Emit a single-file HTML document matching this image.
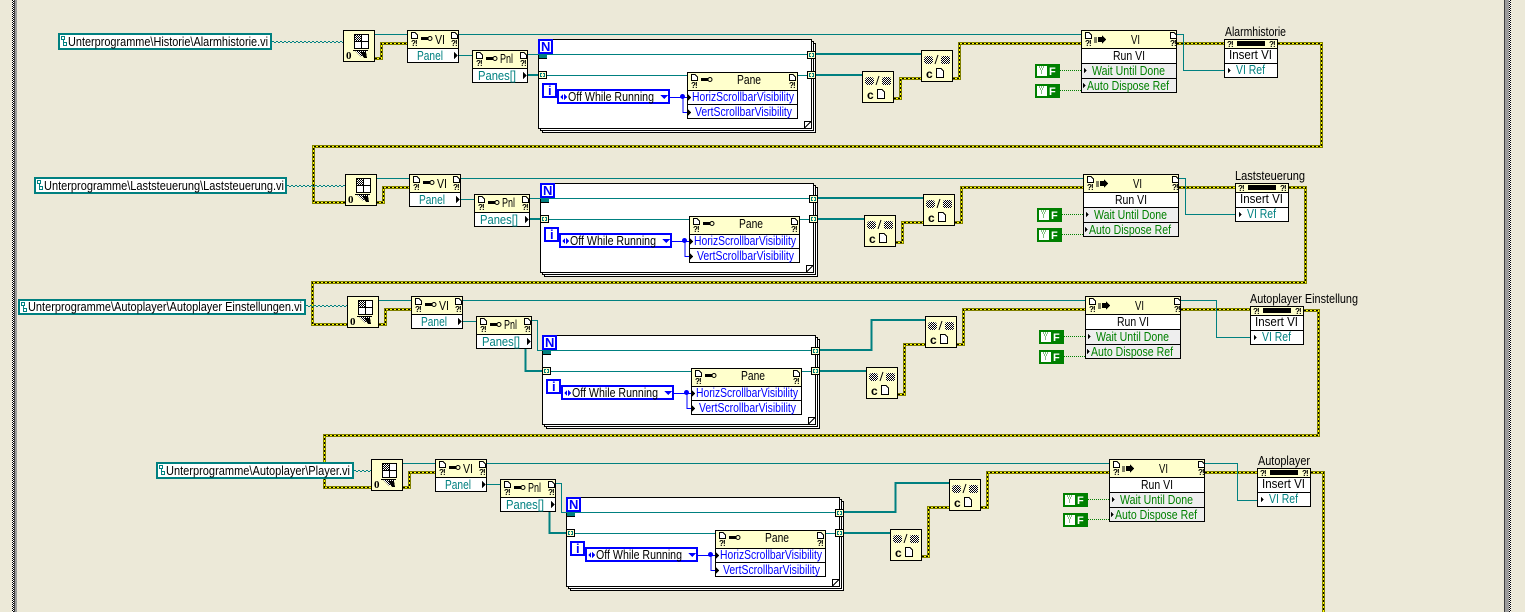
<!DOCTYPE html>
<html>
<head>
<meta charset="utf-8">
<style>
html,body{margin:0;padding:0;background:#ece9d8;overflow:hidden}
svg{display:block}
text{font-family:"Liberation Sans",sans-serif;font-size:13px;fill:#000}
.te text,text.te{fill:#008080}
text.bl{fill:#0000ff}
text.gr{fill:#008000}
text.q{font-size:8px;font-weight:bold}
</style>
</head>
<body>
<svg width="1525" height="612" viewBox="0 0 1525 612" shape-rendering="crispEdges">
<defs>
<pattern id="ck" width="2" height="2" patternUnits="userSpaceOnUse"><rect width="2" height="2" fill="#fff"/><rect width="1" height="1"/><rect x="1" y="1" width="1" height="1"/></pattern>
<path id="d" d="M.5 .5H4L6.5 3V6.5H.5Z" fill="#fff" stroke="#000"/>
<g id="k"><rect x="0" y="1" width="7" height="3"/><circle cx="9" cy="2.5" r="2" fill="#ffc" stroke="#000" shape-rendering="auto"/></g>
<path id="yw" fill="none" d="M375 58.5H381.5V43.5H407M894 98.5H900.5V78.5H921M953 78.5H959.5V43.5H1081M1177 43.5H1224M1278 43.5H1321.5V146.5H313.5V202.5H345
M377 202.5H383.5V187.5H409M896 242.5H902.5V222.5H923M955 222.5H961.5V187.5H1083M1179 187.5H1235M1289 187.5H1305.5V282.5H312.5V324.5H347
M379 324.5H385.5V309.5H411M898 394.5H904.5V344.5H925M957 344.5H963.5V309.5H1085M1181 309.5H1250M1304 310.5H1318.5V435.5H324.5V487.5H371
M403 487.5H409.5V472.5H435M922 556.5H928.5V507.5H949M981 507.5H987.5V472.5H1109M1205 472.5H1257M1311 472.5H1323.5V612"/>

<g id="loop">
<rect x="542.5" y="43.5" width="273" height="89" fill="#fff" stroke="#000"/>
<rect x="540.5" y="41.5" width="273" height="89" fill="#fff" stroke="#000"/>
<rect x="538.5" y="39.5" width="273" height="89" fill="#fff" stroke="#000"/>
<path d="M804.5 128V121.5H811M804.5 128L811.5 121" fill="none" stroke="#000"/>
</g>

<g id="loopTop">
<rect x="539" y="54" width="8" height="4" fill="#008080"/><path d="M538 58.5H547" stroke="#000"/>
<rect x="539" y="40" width="13" height="13" fill="#fff" stroke="#00f" stroke-width="2"/>
<rect x="538.5" y="71.5" width="8" height="7" fill="#ffc" stroke="#000"/>
<path d="M542 73.5H540.5V76.5H542M543 73.5H544.5V76.5H543" fill="none" stroke="#008080"/>
<rect x="807.5" y="51.5" width="8" height="7" fill="#ffc" stroke="#000"/>
<path d="M811 53.5H809.5V56.5H811M812 53.5H813.5V56.5H812" fill="none" stroke="#008080"/>
<rect x="807.5" y="71.5" width="8" height="7" fill="#ffc" stroke="#000"/>
<path d="M811 73.5H809.5V76.5H811M812 73.5H813.5V76.5H812" fill="none" stroke="#008080"/>
<path d="M670 97.5H687M683 97V112.5H687" fill="none" stroke="#00f"/>
<circle cx="682.5" cy="96.5" r="2.5" fill="#00f" shape-rendering="auto"/>
<rect x="543" y="84" width="13" height="13" fill="#fff" stroke="#00f" stroke-width="2"/>
<rect x="558" y="90" width="111" height="13" fill="#fff" stroke="#00f" stroke-width="2"/>
<path d="M563 94V100L560 97ZM564 94V100L567 97ZM660 95H668L664 99Z" fill="#00f"/>
<rect x="687.5" y="72.5" width="110" height="46" fill="#fff" stroke="#000"/>
<rect x="688" y="73" width="109" height="17" fill="#ffc"/>
<path d="M687 90.5H798M687 104.5H798" stroke="#000"/>
<path d="M688 94L691 97.5L688 101ZM688 109L691 112.5L688 116Z"/>
<use href="#d" x="691" y="74"/><use href="#d" x="789" y="74"/>
<use href="#k" x="701" y="77"/>
</g>

<g id="cn">
<rect x=".5" y=".5" width="31" height="31" fill="#ffc" stroke="#000"/>
<rect x="3" y="6" width="9" height="8" rx="3" fill="url(#ck)" shape-rendering="auto"/>
<path d="M14 14L17 5" stroke="#000" fill="none" shape-rendering="auto"/>
<rect x="20" y="6" width="9" height="8" rx="2" fill="url(#ck)" shape-rendering="auto"/>
<path d="M15.5 18.5H20L22.5 21V27.5H15.5Z" fill="#fff" stroke="#000"/>
</g>

<g id="fc">
<rect x="1036" y="65" width="23" height="12" fill="#fff" stroke="#008000" stroke-width="2"/>
<rect x="1047" y="65" width="12" height="12" fill="#008000"/>
<path d="M1039 67H1044M1040 69H1043M1041 71H1043M1041 73H1043" stroke="#008000" stroke-dasharray="1 1"/>
</g>

<g id="A">
<rect x="343.5" y="30.5" width="31" height="31" fill="#ffc" stroke="#000"/>
<rect x="354.5" y="34.5" width="14" height="14" fill="#fff" stroke="#000"/>
<rect x="355" y="35" width="6" height="6" fill="url(#ck)"/>
<path d="M361.5 34V48M354 41.5H368M353 50.5H368" stroke="#000"/>
<path d="M355 51H367L361 57Z" fill="url(#ck)"/>
<path d="M360 52H366L367 58H364Z"/>

<rect x="407.5" y="30.5" width="51" height="32" fill="#fff" stroke="#000"/>
<rect x="408" y="31" width="50" height="17" fill="#ffc"/>
<path d="M407 48.5H459" stroke="#000"/>
<use href="#d" x="411" y="32"/><use href="#d" x="451" y="32"/>
<use href="#k" x="421" y="36"/>
<path d="M454 52L458 55.5L454 59Z"/>

<rect x="472.5" y="50.5" width="55" height="32" fill="#fff" stroke="#000"/>
<rect x="473" y="51" width="54" height="17" fill="#ffc"/>
<path d="M472 68.5H528" stroke="#000"/>
<use href="#d" x="476" y="52"/><use href="#d" x="520" y="52"/>
<use href="#k" x="486" y="56"/>
<path d="M523 72L527 75.5L523 79Z"/>

<use href="#cn" x="921" y="50"/>

<rect x="1081.5" y="30.5" width="95" height="62" fill="#fff" stroke="#000"/>
<rect x="1082" y="31" width="94" height="17" fill="#ffc"/>
<rect x="1082" y="64" width="94" height="28" fill="#eee"/>
<path d="M1081 48.5H1177M1081 63.5H1177M1081 78.5H1177" stroke="#000"/>
<use href="#d" x="1085" y="32"/><use href="#d" x="1170" y="32"/>
<path d="M1094 38H1097M1094 40H1097M1094 42H1097" stroke="#000"/>
<path d="M1098 37H1102V35L1106 39.5L1102 44V42H1098Z"/>
<path d="M1084 68L1087 70.5L1084 73ZM1083 83L1086 85.5L1083 88Z"/>

<use href="#fc"/>
<use href="#fc" y="20"/>
<path d="M1060 70.5H1081M1060 90.5H1081" stroke="#008000" stroke-dasharray="1 1"/>
</g>

<g id="I">
<rect x=".5" y=".5" width="53" height="38" fill="#fff" stroke="#000"/>
<rect x="1" y="1" width="52" height="8" fill="#ffc"/>
<rect x="13" y="2" width="28" height="5"/>
<path d="M0 9.5H54M0 24.5H54" stroke="#000"/>
<path d="M4 29L7 31.5L4 34Z"/>
</g>
</defs>

<rect width="1525" height="612" fill="#ece9d8"/>
<!-- diagram frame borders -->
<rect x="12" y="0" width="2" height="612" fill="url(#ck)"/>
<rect x="14" y="0" width="3" height="612" fill="#9c9c9c"/>
<rect x="14" y="0" width="1" height="612" fill="#404040"/>
<rect x="1504" y="0" width="1" height="612" fill="#404040"/>
<rect x="1505" y="0" width="4" height="612" fill="#9c9c9c"/>
<rect x="1509" y="0" width="2" height="612" fill="url(#ck)"/>

<!-- loop frames -->
<use href="#loop"/>
<use href="#loop" x="2" y="144"/>
<use href="#loop" x="4" y="296"/>
<use href="#loop" x="28" y="458"/>

<!-- yellow refnum wires -->
<use href="#yw" stroke="#808000" stroke-width="3"/>
<use href="#yw" stroke="#ffff00" stroke-width="1"/>
<use href="#yw" stroke="#000" stroke-width="1" stroke-dasharray="2 2"/>

<!-- thin teal wires -->
<path fill="none" stroke="#008080" d="M375 34.5H407M459 34.5H1081M459 55.5H472M528 54.5H807M547 75.5H687M797 75.5H807M1177 34.5H1183.5V70.5H1224
M377 178.5H409M461 178.5H1083M461 199.5H474M530 198.5H809M549 219.5H689M799 219.5H809M1179 178.5H1185.5V214.5H1235
M379 300.5H411M463 300.5H1085M463 321.5H476M532 320.5H537.5V350.5H811M551 371.5H691M801 371.5H811M1181 300.5H1216.5V337.5H1250
M403 463.5H435M487 463.5H1109M487 484.5H500M556 483.5H561.5V512.5H835M575 533.5H715M825 533.5H835M1205 463.5H1237.5V500.5H1257"/>
<!-- thick teal wires -->
<path fill="none" stroke="#008080" stroke-width="2" d="M528 75H539M815 54H921M815 75H862
M530 219H541M817 198H923M817 219H864
M525.5 349V371H543M819 350H871.5V320H925M819 371H866
M549.5 512V533H567M843 512H895.5V483H949M843 533H890"/>

<!-- path wires -->
<path fill="none" stroke="#008080" stroke-dasharray="2 2" d="M272 41.5H343M287 185.5H345M306 305.5H347M354 470.5H371"/>
<path fill="none" stroke="#008080" stroke-dasharray="2 2" stroke-dashoffset="2" d="M272 42.5H343M287 186.5H345M306 306.5H347M354 471.5H371"/>

<!-- path constants -->
<rect x="59" y="34" width="212" height="15" fill="#fff" stroke="#008080" stroke-width="2"/>
<rect x="35" y="178" width="251" height="15" fill="#fff" stroke="#008080" stroke-width="2"/>
<rect x="19" y="300" width="286" height="14" fill="#fff" stroke="#008080" stroke-width="2"/>
<rect x="157" y="463" width="196" height="15" fill="#fff" stroke="#008080" stroke-width="2"/>
<path fill="none" stroke="#008080" d="M61.5 36.5H64.5V39.5H61.5ZM63.5 39.5V45.5H66.5V42.5H63.5M37.5 180.5H40.5V183.5H37.5ZM39.5 183.5V189.5H42.5V186.5H39.5M21.5 302.5H24.5V305.5H21.5ZM23.5 305.5V311.5H26.5V308.5H23.5M159.5 465.5H162.5V468.5H159.5ZM161.5 468.5V474.5H164.5V471.5H161.5"/>
<text x="68" y="46" textLength="200" lengthAdjust="spacingAndGlyphs">Unterprogramme\Historie\Alarmhistorie.vi</text>
<text x="44" y="190" textLength="240" lengthAdjust="spacingAndGlyphs">Unterprogramme\Laststeuerung\Laststeuerung.vi</text>
<text x="28" y="311" textLength="274" lengthAdjust="spacingAndGlyphs">Unterprogramme\Autoplayer\Autoplayer Einstellungen.vi</text>
<text x="166" y="475" textLength="184" lengthAdjust="spacingAndGlyphs">Unterprogramme\Autoplayer\Player.vi</text>

<!-- group 1 -->
<g>
<use href="#A"/><use href="#loopTop"/>
<use href="#cn" x="862" y="71"/>
<text x="346" y="59" font-weight="bold" style="font-family:'Liberation Serif',serif;font-size:11px;font-weight:bold">0</text>
<text class="q" x="411 415 451 455 476 480 520 524 1085 1089 1170 1174" y="46 46 46 46 66 66 66 66 46 46 46 46">?!?!?!?!?!?!</text>
<text x="435" y="44" textLength="10" lengthAdjust="spacingAndGlyphs">VI</text>
<text class="te" x="417" y="60" textLength="26" lengthAdjust="spacingAndGlyphs">Panel</text>
<text x="500" y="63" textLength="13" lengthAdjust="spacingAndGlyphs">Pnl</text>
<text class="te" x="478" y="80" textLength="38" lengthAdjust="spacingAndGlyphs">Panes[]</text>
<text x="926" y="78" style="font-size:12px;font-weight:bold">c</text>
<text x="867" y="99" style="font-size:12px;font-weight:bold">c</text>
<text x="1131" y="44" textLength="9" lengthAdjust="spacingAndGlyphs">VI</text>
<text x="1113" y="60" textLength="32" lengthAdjust="spacingAndGlyphs">Run VI</text>
<text class="gr" x="1092" y="75" textLength="73" lengthAdjust="spacingAndGlyphs">Wait Until Done</text>
<text class="gr" x="1087" y="90" textLength="82" lengthAdjust="spacingAndGlyphs">Auto Dispose Ref</text>
<text x="1049" y="75" style="font-size:11px;font-weight:bold;fill:#fff">F</text>
<text x="1049" y="95" style="font-size:11px;font-weight:bold;fill:#fff">F</text>
<text class="bl" x="541" y="51" style="font-weight:bold">N</text>
<text class="bl" x="548" y="95" style="font-weight:bold">i</text>
<text x="568" y="101" textLength="86" lengthAdjust="spacingAndGlyphs">Off While Running</text>
<text x="737" y="84" textLength="24" lengthAdjust="spacingAndGlyphs">Pane</text>
<text class="q" x="691 695 789 793" y="88">?!?!</text>
<text class="bl" x="692" y="101" textLength="102" lengthAdjust="spacingAndGlyphs">HorizScrollbarVisibility</text>
<text class="bl" x="695" y="116" textLength="97" lengthAdjust="spacingAndGlyphs">VertScrollbarVisibility</text>
</g>

<!-- group 2 -->
<g transform="translate(2,144)">
<use href="#A"/><use href="#loopTop"/>
<use href="#cn" x="862" y="71"/>
<text x="346" y="59" style="font-family:'Liberation Serif',serif;font-size:11px;font-weight:bold">0</text>
<text class="q" x="411 415 451 455 476 480 520 524 1085 1089 1170 1174" y="46 46 46 46 66 66 66 66 46 46 46 46">?!?!?!?!?!?!</text>
<text x="435" y="44" textLength="10" lengthAdjust="spacingAndGlyphs">VI</text>
<text class="te" x="417" y="60" textLength="26" lengthAdjust="spacingAndGlyphs">Panel</text>
<text x="500" y="63" textLength="13" lengthAdjust="spacingAndGlyphs">Pnl</text>
<text class="te" x="478" y="80" textLength="38" lengthAdjust="spacingAndGlyphs">Panes[]</text>
<text x="926" y="78" style="font-size:12px;font-weight:bold">c</text>
<text x="867" y="99" style="font-size:12px;font-weight:bold">c</text>
<text x="1131" y="44" textLength="9" lengthAdjust="spacingAndGlyphs">VI</text>
<text x="1113" y="60" textLength="32" lengthAdjust="spacingAndGlyphs">Run VI</text>
<text class="gr" x="1092" y="75" textLength="73" lengthAdjust="spacingAndGlyphs">Wait Until Done</text>
<text class="gr" x="1087" y="90" textLength="82" lengthAdjust="spacingAndGlyphs">Auto Dispose Ref</text>
<text x="1049" y="75" style="font-size:11px;font-weight:bold;fill:#fff">F</text>
<text x="1049" y="95" style="font-size:11px;font-weight:bold;fill:#fff">F</text>
<text class="bl" x="541" y="51" style="font-weight:bold">N</text>
<text class="bl" x="548" y="95" style="font-weight:bold">i</text>
<text x="568" y="101" textLength="86" lengthAdjust="spacingAndGlyphs">Off While Running</text>
<text x="737" y="84" textLength="24" lengthAdjust="spacingAndGlyphs">Pane</text>
<text class="q" x="691 695 789 793" y="88">?!?!</text>
<text class="bl" x="692" y="101" textLength="102" lengthAdjust="spacingAndGlyphs">HorizScrollbarVisibility</text>
<text class="bl" x="695" y="116" textLength="97" lengthAdjust="spacingAndGlyphs">VertScrollbarVisibility</text>
</g>

<!-- group 3 -->
<g transform="translate(4,266)">
<use href="#A"/>
<text x="346" y="59" style="font-family:'Liberation Serif',serif;font-size:11px;font-weight:bold">0</text>
<text class="q" x="411 415 451 455 476 480 520 524 1085 1089 1170 1174" y="46 46 46 46 66 66 66 66 46 46 46 46">?!?!?!?!?!?!</text>
<text x="435" y="44" textLength="10" lengthAdjust="spacingAndGlyphs">VI</text>
<text class="te" x="417" y="60" textLength="26" lengthAdjust="spacingAndGlyphs">Panel</text>
<text x="500" y="63" textLength="13" lengthAdjust="spacingAndGlyphs">Pnl</text>
<text class="te" x="478" y="80" textLength="38" lengthAdjust="spacingAndGlyphs">Panes[]</text>
<text x="926" y="78" style="font-size:12px;font-weight:bold">c</text>
<text x="1131" y="44" textLength="9" lengthAdjust="spacingAndGlyphs">VI</text>
<text x="1113" y="60" textLength="32" lengthAdjust="spacingAndGlyphs">Run VI</text>
<text class="gr" x="1092" y="75" textLength="73" lengthAdjust="spacingAndGlyphs">Wait Until Done</text>
<text class="gr" x="1087" y="90" textLength="82" lengthAdjust="spacingAndGlyphs">Auto Dispose Ref</text>
<text x="1049" y="75" style="font-size:11px;font-weight:bold;fill:#fff">F</text>
<text x="1049" y="95" style="font-size:11px;font-weight:bold;fill:#fff">F</text>
</g>
<g transform="translate(4,296)">
<use href="#loopTop"/>
<use href="#cn" x="862" y="71"/>
<text x="867" y="99" style="font-size:12px;font-weight:bold">c</text>
<text class="bl" x="541" y="51" style="font-weight:bold">N</text>
<text class="bl" x="548" y="95" style="font-weight:bold">i</text>
<text x="568" y="101" textLength="86" lengthAdjust="spacingAndGlyphs">Off While Running</text>
<text x="737" y="84" textLength="24" lengthAdjust="spacingAndGlyphs">Pane</text>
<text class="q" x="691 695 789 793" y="88">?!?!</text>
<text class="bl" x="692" y="101" textLength="102" lengthAdjust="spacingAndGlyphs">HorizScrollbarVisibility</text>
<text class="bl" x="695" y="116" textLength="97" lengthAdjust="spacingAndGlyphs">VertScrollbarVisibility</text>
</g>

<!-- group 4 -->
<g transform="translate(28,429)">
<use href="#A"/>
<text x="346" y="59" style="font-family:'Liberation Serif',serif;font-size:11px;font-weight:bold">0</text>
<text class="q" x="411 415 451 455 476 480 520 524 1085 1089 1170 1174" y="46 46 46 46 66 66 66 66 46 46 46 46">?!?!?!?!?!?!</text>
<text x="435" y="44" textLength="10" lengthAdjust="spacingAndGlyphs">VI</text>
<text class="te" x="417" y="60" textLength="26" lengthAdjust="spacingAndGlyphs">Panel</text>
<text x="500" y="63" textLength="13" lengthAdjust="spacingAndGlyphs">Pnl</text>
<text class="te" x="478" y="80" textLength="38" lengthAdjust="spacingAndGlyphs">Panes[]</text>
<text x="926" y="78" style="font-size:12px;font-weight:bold">c</text>
<text x="1131" y="44" textLength="9" lengthAdjust="spacingAndGlyphs">VI</text>
<text x="1113" y="60" textLength="32" lengthAdjust="spacingAndGlyphs">Run VI</text>
<text class="gr" x="1092" y="75" textLength="73" lengthAdjust="spacingAndGlyphs">Wait Until Done</text>
<text class="gr" x="1087" y="90" textLength="82" lengthAdjust="spacingAndGlyphs">Auto Dispose Ref</text>
<text x="1049" y="75" style="font-size:11px;font-weight:bold;fill:#fff">F</text>
<text x="1049" y="95" style="font-size:11px;font-weight:bold;fill:#fff">F</text>
</g>
<g transform="translate(28,458)">
<use href="#loopTop"/>
<use href="#cn" x="862" y="71"/>
<text x="867" y="99" style="font-size:12px;font-weight:bold">c</text>
<text class="bl" x="541" y="51" style="font-weight:bold">N</text>
<text class="bl" x="548" y="95" style="font-weight:bold">i</text>
<text x="568" y="101" textLength="86" lengthAdjust="spacingAndGlyphs">Off While Running</text>
<text x="737" y="84" textLength="24" lengthAdjust="spacingAndGlyphs">Pane</text>
<text class="q" x="691 695 789 793" y="88">?!?!</text>
<text class="bl" x="692" y="101" textLength="102" lengthAdjust="spacingAndGlyphs">HorizScrollbarVisibility</text>
<text class="bl" x="695" y="116" textLength="97" lengthAdjust="spacingAndGlyphs">VertScrollbarVisibility</text>
</g>

<!-- insert VI nodes -->
<g transform="translate(1224,39)">
<use href="#I"/>
<text class="q" x="3 7 45 49" y="8">?!?!</text>
<text x="5" y="20" textLength="43" lengthAdjust="spacingAndGlyphs">Insert VI</text>
<text class="te" x="12" y="35" textLength="29" lengthAdjust="spacingAndGlyphs">VI Ref</text>
<text x="1" y="-3" textLength="61" lengthAdjust="spacingAndGlyphs">Alarmhistorie</text>
</g>
<g transform="translate(1235,183)">
<use href="#I"/>
<text class="q" x="3 7 45 49" y="8">?!?!</text>
<text x="5" y="20" textLength="43" lengthAdjust="spacingAndGlyphs">Insert VI</text>
<text class="te" x="12" y="35" textLength="29" lengthAdjust="spacingAndGlyphs">VI Ref</text>
<text x="0" y="-3" textLength="70" lengthAdjust="spacingAndGlyphs">Laststeuerung</text>
</g>
<g transform="translate(1250,306)">
<use href="#I"/>
<text class="q" x="3 7 45 49" y="8">?!?!</text>
<text x="5" y="20" textLength="43" lengthAdjust="spacingAndGlyphs">Insert VI</text>
<text class="te" x="12" y="35" textLength="29" lengthAdjust="spacingAndGlyphs">VI Ref</text>
<text x="0" y="-3" textLength="108" lengthAdjust="spacingAndGlyphs">Autoplayer Einstellung</text>
</g>
<g transform="translate(1257,468)">
<use href="#I"/>
<text class="q" x="3 7 45 49" y="8">?!?!</text>
<text x="5" y="20" textLength="43" lengthAdjust="spacingAndGlyphs">Insert VI</text>
<text class="te" x="12" y="35" textLength="29" lengthAdjust="spacingAndGlyphs">VI Ref</text>
<text x="1" y="-3" textLength="52" lengthAdjust="spacingAndGlyphs">Autoplayer</text>
</g>
</svg>
</body>
</html>
